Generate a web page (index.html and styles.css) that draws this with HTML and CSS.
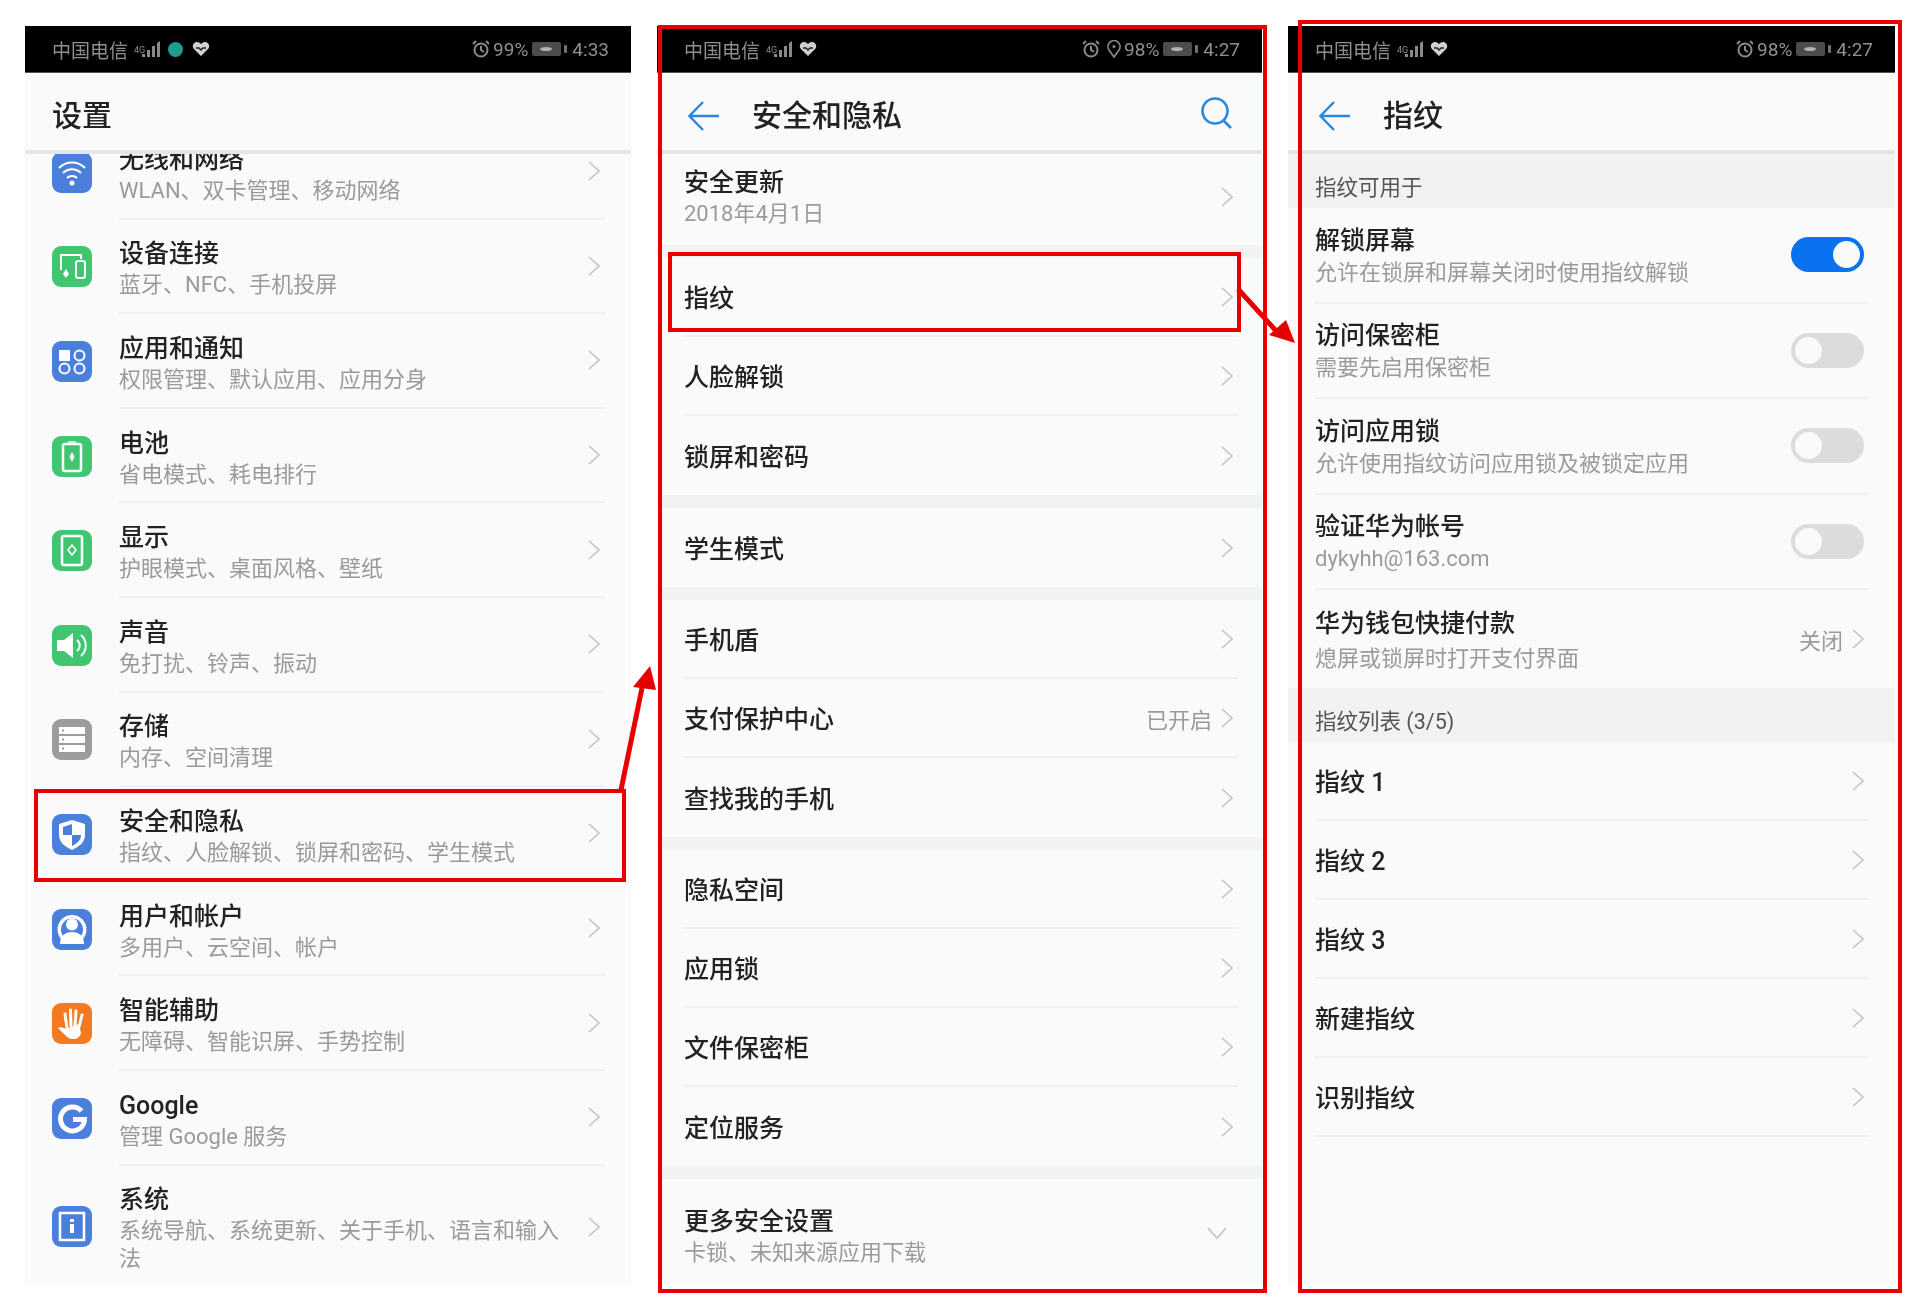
FILE: index.html
```html
<!DOCTYPE html>
<html lang="zh-CN">
<head>
  <meta charset="UTF-8" />
  <title>指纹设置步骤</title>
  <link rel="stylesheet" href="styles.css">
</head>
<body>
  <!-- shared icons -->
  <svg class="defs" width="0" height="0">
    <symbol id="chev" viewBox="0 0 12 20"><path d="M1 1l10 9-10 9" fill="none" stroke="#c4c4c4" stroke-width="1.6"/></symbol>
    <symbol id="back" viewBox="0 0 31 30"><path d="M15 1L1.5 15 15 29M1.5 15H31" fill="none" stroke="#2b86e0" stroke-width="2.4"/></symbol>
    <symbol id="signal" viewBox="0 0 20 20"><path d="M1 18h3v-3H1zM6 18h3v-7H6zM11 18h3V7h-3zM16 18h3V2l-3 2z" fill="#8a8a8a"/></symbol>
    <symbol id="heart" viewBox="0 0 18 16"><path d="M9 15L1.5 7.5C-.5 4 2 1 5 1c2 0 3 1 4 2 1-1 2-2 4-2 3 0 5.500 3 3.500 6.500z" fill="#d0d0d0"/><path d="M4 7h3l2 2 2-2h3" fill="none" stroke="#222" stroke-width="1.500"/></symbol>
    <symbol id="alarm" viewBox="0 0 18 18"><circle cx="9" cy="10" r="6.500" fill="none" stroke="#8a8a8a" stroke-width="2"/><path d="M9 6v4l3 2M1 4l3-3M17 4l-3-3" fill="none" stroke="#8a8a8a" stroke-width="2"/></symbol>
    <symbol id="pin" viewBox="0 0 14 18"><path d="M7 17L2 10a6 6 0 1 1 10 0z" fill="none" stroke="#8a8a8a" stroke-width="1.700"/><circle cx="7" cy="6.500" r="1.500" fill="#8a8a8a"/></symbol>
    <symbol id="battery" viewBox="0 0 36 14"><rect x="0" y="0" width="29" height="14" rx="2" fill="#4c4c4c"/><ellipse cx="14" cy="7" rx="6" ry="2" fill="#b0b0b0"/><rect x="32" y="3" width="3" height="8" rx="1" fill="#707070"/></symbol>
  </svg>

  <main class="page">
    <!-- 设置 -->
    <section class="phone phone-settings">
      <div class="status">
        <div class="status-side">
          <span>中国电信</span>
          <span class="net">4G</span>
          <svg class="ic-signal"><use href="#signal"/></svg>
          <i class="vpn-dot"></i>
          <svg class="ic-heart"><use href="#heart"/></svg>
        </div>
        <div class="status-side">
          <svg class="ic-alarm"><use href="#alarm"/></svg>
          <span>99%</span>
          <svg class="ic-batt"><use href="#battery"/></svg>
          <span>4:33</span>
        </div>
      </div>
      <header class="bar"><h1>设置</h1></header>
      <div class="list clip">
        <div class="item first">
          <svg class="app-icon" viewBox="0 0 40 41"><rect width="40" height="41" rx="9" fill="#4b7fdc"/><path d="M7 16a18 18 0 0 1 26 0M11 21a12.500 12.500 0 0 1 18 0M15 26a7 7 0 0 1 10 0" fill="none" stroke="#fff" stroke-width="2"/><circle cx="20" cy="31" r="2.500" fill="#fff"/></svg>
          <div class="item-main"><div class="text"><div class="title">无线和网络</div><div class="sub">WLAN、双卡管理、移动网络</div></div><svg class="chev"><use href="#chev"/></svg></div>
        </div>
        <div class="item">
          <svg class="app-icon" viewBox="0 0 40 41"><rect width="40" height="41" rx="9" fill="#40c671"/><path d="M9 24V9h20v4" fill="none" stroke="#fff" stroke-width="2"/><rect x="24" y="15" width="9" height="17" rx="2" fill="none" stroke="#fff" stroke-width="2"/><path d="M14 23l3 5-3 4-3-4z" fill="#fff"/></svg>
          <div class="item-main"><div class="text"><div class="title">设备连接</div><div class="sub">蓝牙、NFC、手机投屏</div></div><svg class="chev"><use href="#chev"/></svg></div>
        </div>
        <div class="item">
          <svg class="app-icon" viewBox="0 0 40 41"><rect width="40" height="41" rx="9" fill="#4b7fdc"/><rect x="7" y="9" width="11" height="11" fill="#fff"/><circle cx="27.500" cy="14.500" r="5" fill="none" stroke="#fff" stroke-width="2"/><circle cx="12.500" cy="27.500" r="5" fill="none" stroke="#fff" stroke-width="2"/><circle cx="27.500" cy="27.500" r="5" fill="none" stroke="#fff" stroke-width="2"/></svg>
          <div class="item-main"><div class="text"><div class="title">应用和通知</div><div class="sub">权限管理、默认应用、应用分身</div></div><svg class="chev"><use href="#chev"/></svg></div>
        </div>
        <div class="item">
          <svg class="app-icon" viewBox="0 0 40 41"><rect width="40" height="41" rx="9" fill="#40c671"/><rect x="16" y="5" width="8" height="3" fill="#fff" opacity=".7"/><rect x="11" y="8" width="18" height="27" rx="2" fill="none" stroke="#fff" stroke-width="2.500"/><path d="M20 16l2.500 5-2.500 5-2.500-5z" fill="#fff"/></svg>
          <div class="item-main"><div class="text"><div class="title">电池</div><div class="sub">省电模式、耗电排行</div></div><svg class="chev"><use href="#chev"/></svg></div>
        </div>
        <div class="item">
          <svg class="app-icon" viewBox="0 0 40 41"><rect width="40" height="41" rx="9" fill="#40c671"/><rect x="10" y="6" width="20" height="29" rx="2" fill="none" stroke="#fff" stroke-width="2.500"/><path d="M20 15l4 5-4 5-4-5z" fill="none" stroke="#fff" stroke-width="1.500"/></svg>
          <div class="item-main"><div class="text"><div class="title">显示</div><div class="sub">护眼模式、桌面风格、壁纸</div></div><svg class="chev"><use href="#chev"/></svg></div>
        </div>
        <div class="item">
          <svg class="app-icon" viewBox="0 0 40 41"><rect width="40" height="41" rx="9" fill="#40c671"/><path d="M5 15h7l9-7v25l-9-7H5z" fill="#fff"/><path d="M25 15a7 7 0 0 1 0 11M29 10a14 14 0 0 1 0 21" fill="none" stroke="#fff" stroke-width="2"/></svg>
          <div class="item-main"><div class="text"><div class="title">声音</div><div class="sub">免打扰、铃声、振动</div></div><svg class="chev"><use href="#chev"/></svg></div>
        </div>
        <div class="item">
          <svg class="app-icon" viewBox="0 0 40 41"><rect width="40" height="41" rx="9" fill="#9c9c9c"/><path d="M7 8h26v7H7zM7 17h26v7H7zM7 26h26v7H7z" fill="#fff"/><path d="M10 11.500h2M10 20.500h2M10 29.500h2" stroke="#9c9c9c" stroke-width="2"/></svg>
          <div class="item-main"><div class="text"><div class="title">存储</div><div class="sub">内存、空间清理</div></div><svg class="chev"><use href="#chev"/></svg></div>
        </div>
        <div class="item">
          <svg class="app-icon" viewBox="0 0 40 41"><rect width="40" height="41" rx="9" fill="#4b7fdc"/><path d="M20 6l13 4v11c0 8-7 12-13 15-6-3-13-7-13-15V10z" fill="#fff"/><path d="M20 10l-9 3v8h9zM20 21h9c0 6-5 9-9 11z" fill="#4b7fdc"/></svg>
          <div class="item-main"><div class="text"><div class="title">安全和隐私</div><div class="sub">指纹、人脸解锁、锁屏和密码、学生模式</div></div><svg class="chev"><use href="#chev"/></svg></div>
        </div>
        <div class="item">
          <svg class="app-icon" viewBox="0 0 40 41"><rect width="40" height="41" rx="9" fill="#4b7fdc"/><circle cx="20" cy="20.500" r="14.500" fill="#fff"/><circle cx="20" cy="20.500" r="11" fill="#4b7fdc"/><circle cx="20" cy="15.500" r="6" fill="#fff"/><path d="M8 35c0-9 6-12 12-12s12 3 12 12z" fill="#fff"/></svg>
          <div class="item-main"><div class="text"><div class="title">用户和帐户</div><div class="sub">多用户、云空间、帐户</div></div><svg class="chev"><use href="#chev"/></svg></div>
        </div>
        <div class="item">
          <svg class="app-icon" viewBox="0 0 40 41"><rect width="40" height="41" rx="9" fill="#f47a22"/><path d="M6 25c3-2 6 0 8 1l13-5 2 9c-1 4-4 6-8 6-4 0-6-2-8-4z" fill="#fff"/><path d="M15 25l-2-14M19 23l-.5-16M23 23l1-15M27 24l3-12" fill="none" stroke="#fff" stroke-width="3" stroke-linecap="round"/></svg>
          <div class="item-main"><div class="text"><div class="title">智能辅助</div><div class="sub">无障碍、智能识屏、手势控制</div></div><svg class="chev"><use href="#chev"/></svg></div>
        </div>
        <div class="item">
          <svg class="app-icon" viewBox="0 0 40 41"><rect width="40" height="41" rx="9" fill="#4b7fdc"/><path d="M29.500 13a12 12 0 1 0 3 8.500H21" fill="none" stroke="#fff" stroke-width="5"/></svg>
          <div class="item-main"><div class="text"><div class="title">Google</div><div class="sub">管理 Google 服务</div></div><svg class="chev"><use href="#chev"/></svg></div>
        </div>
        <div class="item last">
          <svg class="app-icon" viewBox="0 0 40 41"><rect width="40" height="41" rx="9" fill="#4b7fdc"/><rect x="8" y="7" width="24" height="27" fill="none" stroke="#fff" stroke-width="2.500"/><path d="M18 13h4v3h-4zM18 18h4v9h-4z" fill="#fff"/></svg>
          <div class="item-main"><div class="text"><div class="title">系统</div><div class="sub">系统导航、系统更新、关于手机、语言和输入法</div></div><svg class="chev"><use href="#chev"/></svg></div>
        </div>
      </div>
    </section>

    <!-- 安全和隐私 -->
    <section class="phone phone-security">
      <div class="status">
        <div class="status-side">
          <span>中国电信</span>
          <span class="net">4G</span>
          <svg class="ic-signal"><use href="#signal"/></svg>
          <svg class="ic-heart"><use href="#heart"/></svg>
        </div>
        <div class="status-side">
          <svg class="ic-alarm"><use href="#alarm"/></svg>
          <svg class="ic-pin"><use href="#pin"/></svg>
          <span>98%</span>
          <svg class="ic-batt"><use href="#battery"/></svg>
          <span>4:27</span>
        </div>
      </div>
      <header class="bar bar-sub">
        <svg class="ic-back"><use href="#back"/></svg>
        <h1>安全和隐私</h1>
        <svg class="ic-search" viewBox="0 0 33 32"><circle cx="15" cy="14" r="12.500" fill="none" stroke="#2b86e0" stroke-width="2.600"/><path d="M23.500 23.500l7.500 7.500" stroke="#2b86e0" stroke-width="2.600"/></svg>
      </header>
      <div class="list">
        <div class="group">
          <div class="row row-first"><div class="text"><div class="title">安全更新</div><div class="sub">2018年4月1日</div></div><svg class="chev"><use href="#chev"/></svg></div>
        </div>
        <div class="group">
          <div class="row"><div class="title">指纹</div><svg class="chev"><use href="#chev"/></svg></div>
          <div class="row"><div class="title">人脸解锁</div><svg class="chev"><use href="#chev"/></svg></div>
          <div class="row"><div class="title">锁屏和密码</div><svg class="chev"><use href="#chev"/></svg></div>
        </div>
        <div class="group">
          <div class="row"><div class="title">学生模式</div><svg class="chev"><use href="#chev"/></svg></div>
        </div>
        <div class="group">
          <div class="row"><div class="title">手机盾</div><svg class="chev"><use href="#chev"/></svg></div>
          <div class="row"><div class="title">支付保护中心</div><span class="value">已开启</span><svg class="chev"><use href="#chev"/></svg></div>
          <div class="row"><div class="title">查找我的手机</div><svg class="chev"><use href="#chev"/></svg></div>
        </div>
        <div class="group">
          <div class="row"><div class="title">隐私空间</div><svg class="chev"><use href="#chev"/></svg></div>
          <div class="row"><div class="title">应用锁</div><svg class="chev"><use href="#chev"/></svg></div>
          <div class="row"><div class="title">文件保密柜</div><svg class="chev"><use href="#chev"/></svg></div>
          <div class="row"><div class="title">定位服务</div><svg class="chev"><use href="#chev"/></svg></div>
        </div>
        <div class="group">
          <div class="row row-more"><div class="text"><div class="title">更多安全设置</div><div class="sub">卡锁、未知来源应用下载</div></div><svg class="ic-down" viewBox="0 0 20 12"><path d="M1 1l9 10 9-10" fill="none" stroke="#c4c4c4" stroke-width="1.800"/></svg></div>
        </div>
      </div>
    </section>

    <!-- 指纹 -->
    <section class="phone phone-finger">
      <div class="status">
        <div class="status-side">
          <span>中国电信</span>
          <span class="net">4G</span>
          <svg class="ic-signal"><use href="#signal"/></svg>
          <svg class="ic-heart"><use href="#heart"/></svg>
        </div>
        <div class="status-side">
          <svg class="ic-alarm"><use href="#alarm"/></svg>
          <span>98%</span>
          <svg class="ic-batt"><use href="#battery"/></svg>
          <span>4:27</span>
        </div>
      </div>
      <header class="bar bar-sub">
        <svg class="ic-back"><use href="#back"/></svg>
        <h1>指纹</h1>
      </header>
      <div class="list">
        <div class="caption">指纹可用于</div>
        <div class="row row-tall"><div class="text"><div class="title">解锁屏幕</div><div class="sub">允许在锁屏和屏幕关闭时使用指纹解锁</div></div><span class="toggle on"></span></div>
        <div class="row row-tall"><div class="text"><div class="title">访问保密柜</div><div class="sub">需要先启用保密柜</div></div><span class="toggle"></span></div>
        <div class="row row-tall"><div class="text"><div class="title">访问应用锁</div><div class="sub">允许使用指纹访问应用锁及被锁定应用</div></div><span class="toggle"></span></div>
        <div class="row row-tall"><div class="text"><div class="title">验证华为帐号</div><div class="sub">dykyhh@163.com</div></div><span class="toggle"></span></div>
        <div class="row row-tall row-end"><div class="text"><div class="title">华为钱包快捷付款</div><div class="sub">熄屏或锁屏时打开支付界面</div></div><span class="value">关闭</span><svg class="chev"><use href="#chev"/></svg></div>
        <div class="caption">指纹列表 (3/5)</div>
        <div class="row"><div class="title">指纹 1</div><svg class="chev"><use href="#chev"/></svg></div>
        <div class="row"><div class="title">指纹 2</div><svg class="chev"><use href="#chev"/></svg></div>
        <div class="row"><div class="title">指纹 3</div><svg class="chev"><use href="#chev"/></svg></div>
        <div class="row"><div class="title">新建指纹</div><svg class="chev"><use href="#chev"/></svg></div>
        <div class="row"><div class="title">识别指纹</div><svg class="chev"><use href="#chev"/></svg></div>
      </div>
    </section>
  </main>

  <!-- red annotation boxes and arrows over the screenshots -->
  <svg class="notes" viewBox="0 0 1920 1311">
    <g fill="none" stroke="#e80000" stroke-width="4">
      <rect x="36" y="791" width="588" height="89"/>
      <rect x="660" y="27" width="605" height="1264"/>
      <rect x="670" y="254" width="569" height="76"/>
      <rect x="1300" y="22" width="600" height="1269"/>
      <path d="M621 790l21-102M1238 289l40 44" stroke-width="5"/>
    </g>
    <path d="M650 666l-17 21 23 3zM1295 343l-9-23-17 15z" fill="#e80000"/>
  </svg>
</body>
</html>
```

FILE: styles.css
```css
* {
  box-sizing: border-box;
}

body {
  margin: 0;
  background: white;
  font-family: Roboto, "Noto Sans CJK SC", sans-serif;
}

.defs {
  position: absolute;
}

.page {
  display: flex;
  gap: 26px;
  height: 1311px;
  padding: 26px 0 0 25px;
}

.phone {
  display: flex;
  flex-direction: column;
  height: 1260px;
  background: #fafafa;
  filter: blur(0.75px);
}

.phone-settings { width: 606px; }
.phone-security { width: 605px; background: #f2f2f2; }
.phone-finger { width: 607px; }

/* status bar */
.status {
  display: flex;
  justify-content: space-between;
  align-items: center;
  height: 47px;
  padding: 0 22px 0 27px;
  background: black;
  border-bottom: 1px solid #555;
  color: #8f8f8f;
  font-size: 19px;
}

.status-side {
  display: flex;
  align-items: center;
  gap: 3px;
}

.net {
  align-self: flex-start;
  margin: 9px -7px 0 3px;
  font-size: 9px;
  line-height: 10px;
}

.ic-signal { width: 20px; height: 20px; }
.ic-heart { width: 18px; height: 16px; margin-left: 6px; }
.ic-signal + .ic-heart { margin-left: 3px; }
.ic-alarm { width: 18px; height: 18px; }
.ic-pin { width: 14px; height: 18px; margin-left: 4px; }
.ic-batt { width: 36px; height: 14px; margin: 0 1px 0 1px; }

.vpn-dot {
  width: 15px;
  height: 15px;
  margin-left: 4px;
  border-radius: 50%;
  background: #1f9d8e;
}

/* title bar */
.bar {
  display: flex;
  align-items: center;
  height: 81px;
  padding: 8px 29px 0 27px;
  background: #fafafa;
  border-bottom: 4px solid #e4e4e4;
}

.bar h1 {
  margin: 0;
  font-size: 30px;
  font-weight: 500;
  color: #222;
  line-height: 40px;
}

.bar-sub {
  padding-left: 31px;
  gap: 33px;
}

.ic-back { width: 31px; height: 30px; }
.ic-search { width: 33px; height: 32px; margin: -5px 0 0 auto; }

/* lists */
.list {
  flex: 1;
  min-height: 0;
}

.clip {
  overflow: hidden;
}

.title {
  font-size: 25px;
  font-weight: 500;
  line-height: 35px;
  color: #222;
}

.sub {
  font-size: 22px;
  line-height: 28px;
  color: #9a9a9a;
}

.text {
  min-width: 0;
}

.chev {
  flex: none;
  width: 12px;
  height: 20px;
}

.value {
  margin-left: auto;
  margin-right: 9px;
  font-size: 22px;
  color: #9a9a9a;
}

/* settings page rows */
.item {
  display: flex;
  align-items: center;
  padding: 0 26px 0 27px;
}

.item.first {
  margin-top: -29px;
}

.app-icon {
  flex: none;
  width: 40px;
  height: 41px;
  margin-right: 27px;
}

.item-main {
  flex: 1;
  display: flex;
  align-items: center;
  justify-content: space-between;
  height: 94.6px;
  padding-right: 5px;
  border-bottom: 2px solid #f1f1f1;
}

.item-main .text {
  margin-top: 4px;
}

.item.last .item-main {
  height: 122px;
  border-bottom: 0;
}

.item.last .text {
  margin-top: 2px;
}

.item.last .sub {
  width: 445px;
}

/* rows of the two sub pages */
.row {
  display: flex;
  align-items: center;
  justify-content: space-between;
  height: 79px;
  margin: 0 27px 0 27px;
  padding-right: 4px;
  border-bottom: 2px solid #f1f1f1;
}

.row > .title {
  margin-top: 4px;
}

.row .title + .value {
  margin-left: auto;
}

.group {
  margin-bottom: 13px;
  background: #fafafa;
}

.group:last-child {
  margin-bottom: 0;
}

.phone-security .row {
  margin: 0 24px 0 27px;
  padding-right: 5px;
}

.group .row:last-child {
  border-bottom: 0;
}

.phone-security .row-first {
  height: 91px;
  padding-bottom: 6px;
}

.phone-security .row-more {
  height: 107px;
  border-bottom: 2px solid #f1f1f1;
}

.row-more .text {
  margin-top: 5px;
}

.ic-down {
  width: 20px;
  height: 12px;
  margin-right: 6px;
}

.row-tall {
  height: 95.5px;
}

.row-tall .sub {
  margin-top: 1px;
}

.row-end {
  height: 98px;
  border-bottom: 0;
}

.row-end .sub {
  margin-top: 4px;
}

.caption {
  display: flex;
  align-items: center;
  height: 54px;
  padding: 8px 0 0 27px;
  background: #f2f2f2;
  font-size: 21.5px;
  color: #555;
}

/* switches */
.toggle {
  position: relative;
  flex: none;
  width: 73px;
  height: 35px;
  border-radius: 18px;
  background: #dcdcdc;
}

.toggle::after {
  content: "";
  position: absolute;
  top: 4px;
  left: 4px;
  width: 27px;
  height: 27px;
  border-radius: 50%;
  background: #fafafa;
}

.toggle.on {
  background: #0a72f0;
}

.toggle.on::after {
  left: 42px;
}

.notes {
  position: absolute;
  left: 0;
  top: 0;
  width: 1920px;
  height: 1311px;
  pointer-events: none;
}
```
